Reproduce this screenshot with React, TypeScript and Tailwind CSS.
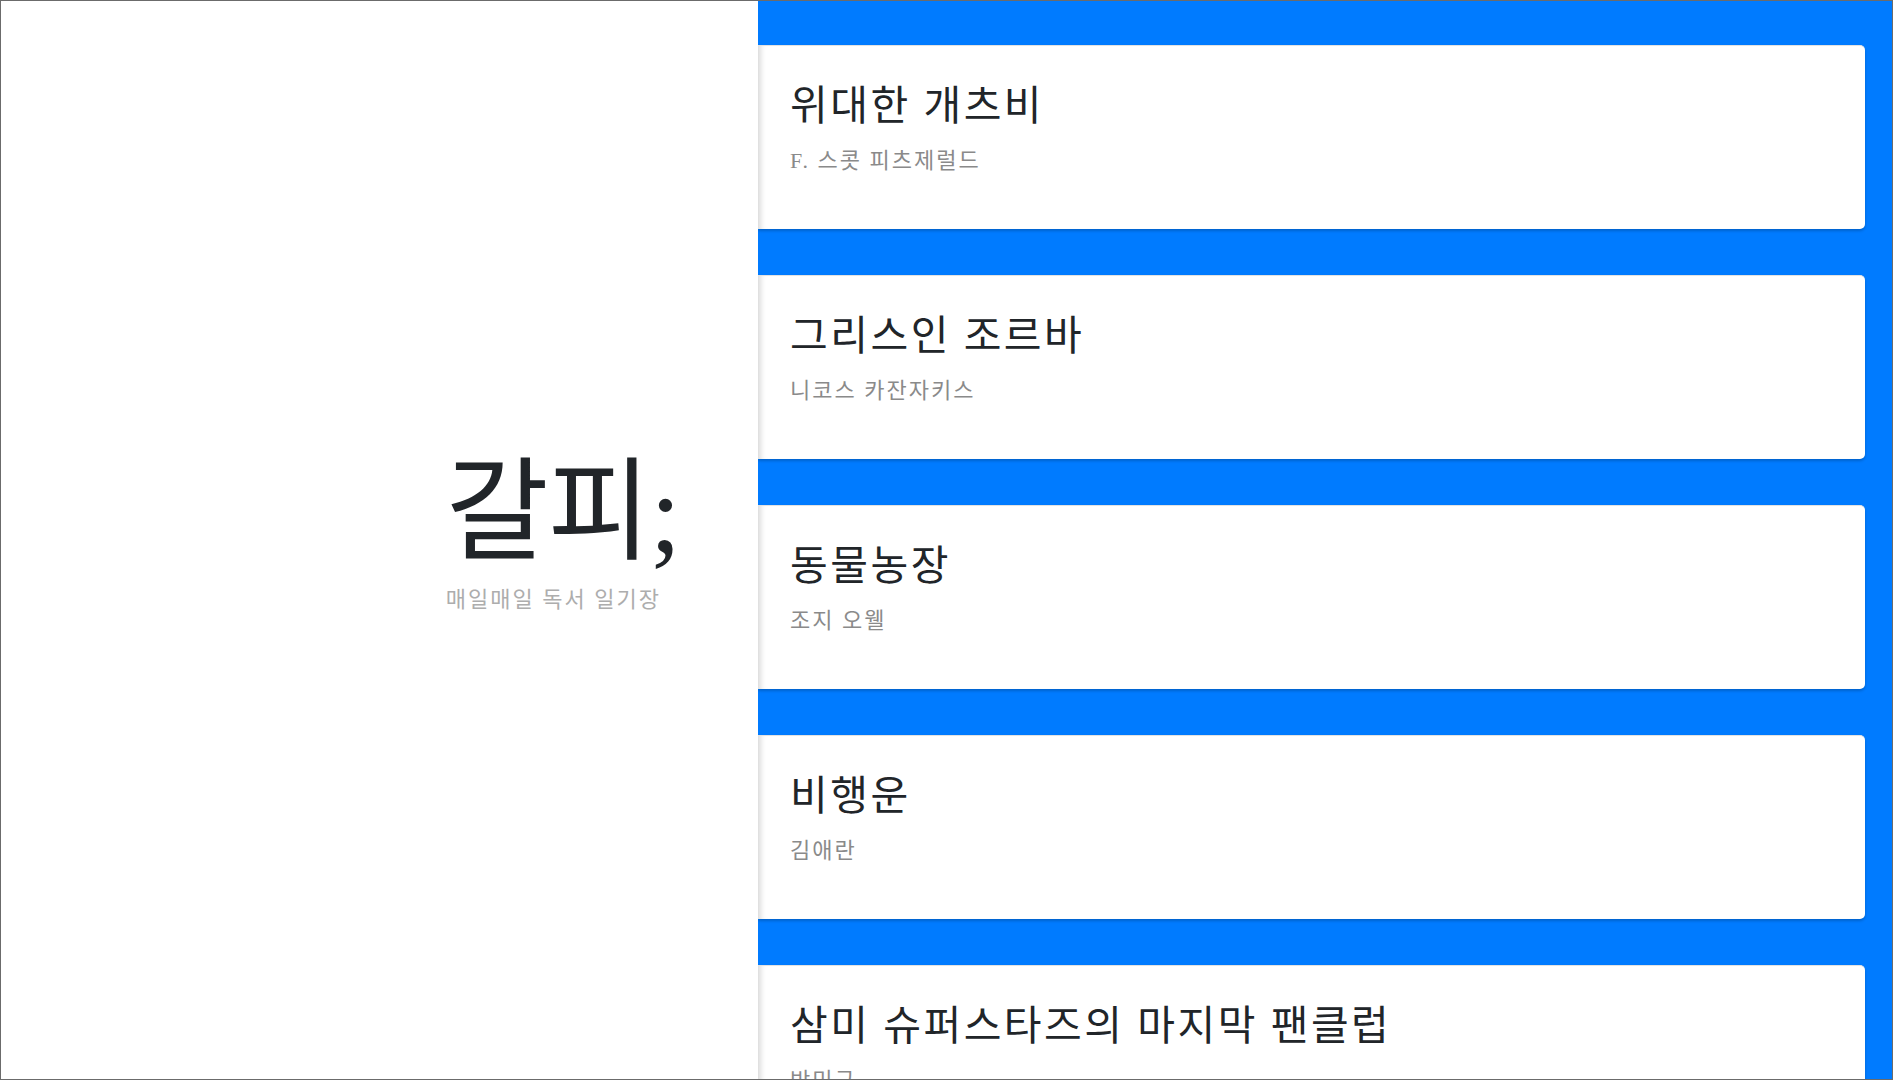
const books = [
  { title: '위대한 개츠비', author: 'F. 스콧 피츠제럴드' },
  { title: '그리스인 조르바', author: '니코스 카잔자키스' },
  { title: '동물농장', author: '조지 오웰' },
  { title: '비행운', author: '김애란' },
  { title: '삼미 슈퍼스타즈의 마지막 팬클럽', author: '박민규' },
]

export default function App() {
  return (
    <div className="h-screen w-full overflow-hidden border border-[#6b6b6b] flex font-['Liberation_Serif','Noto_Sans_CJK_KR',serif]">
      {/* brand panel */}
      <div className="w-[757px] shrink-0 bg-white flex items-center justify-end pr-[78px] pb-[8px]">
        <div>
          <h1 className="text-[112px] leading-[1] text-[#212529] tracking-[-1px]">갈피;</h1>
          <p className="mt-[16px] text-[22px] leading-[1.4] text-[#adadad] tracking-[2px]">매일매일 독서 일기장</p>
        </div>
      </div>

      {/* book list */}
      <div className="flex-1 bg-[#007bff] pt-[44px] pr-[27px] overflow-hidden">
        {books.map((book, i) => (
          <div
            key={i}
            className="h-[184px] mb-[46px] bg-white rounded-r-[5px] border-t border-[#e2e2e2] shadow-[inset_7px_0_6px_-5px_rgba(0,0,0,0.18),0_2px_3px_rgba(0,0,0,0.2)] pl-[32px] pt-[36px]"
          >
            <h2 className="text-[41px] leading-[1.2] text-[#212529] tracking-[2.5px]">{book.title}</h2>
            <p className="mt-[13px] text-[22px] leading-[1.5] text-[#8a8a8a] tracking-[2px]">{book.author}</p>
          </div>
        ))}
      </div>
    </div>
  )
}
